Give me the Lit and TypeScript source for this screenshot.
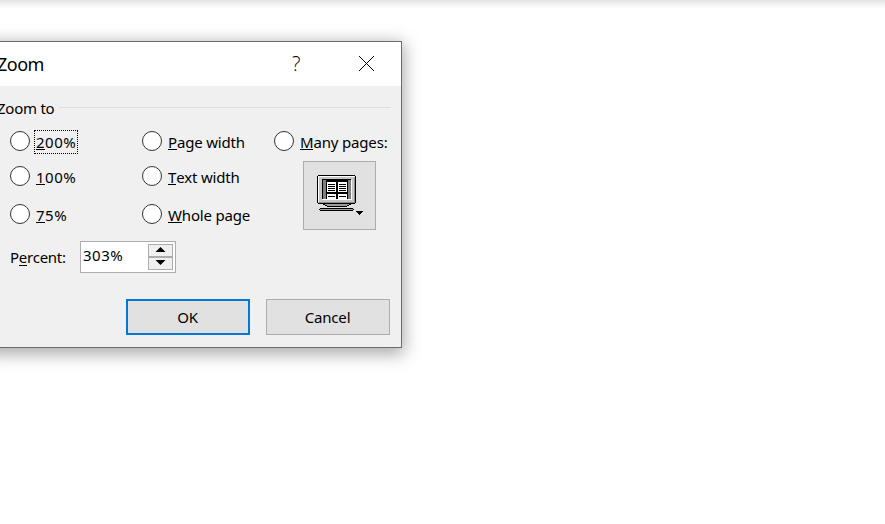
import { LitElement, html, css, svg } from "lit";
import { customElement, property } from "lit/decorators.js";

@customElement("zoom-option")
class ZoomOption extends LitElement {
  @property() label = "";
  @property({ type: Boolean }) focused = false;
  static styles = css`
    :host { display: flex; height: 22px; align-items: flex-start; white-space: nowrap; }
    .dot { flex: none; box-sizing: border-box; width: 20px; height: 20px; border: 1.2px solid #333; border-radius: 50%; background: #fff; }
    .label { box-sizing: border-box; height: 24px; margin: -1px 0 0 4px; padding: 0 1px; border: 1px solid transparent; line-height: 23px; }
    .number { letter-spacing: 0.5px; }
    .focus { border: 1px dotted #000; padding-right: 0.5px; }
    .key { box-shadow: 0 1px 0 #000; display: inline-block; height: 18px; line-height: 23px; }
  `;
  render() {
    const number = this.label.endsWith("%") ? "number" : "";
    return html`<span class="dot"></span
      ><span class="label ${number} ${this.focused ? "focus" : ""}"><span class="key">${this.label[0]}</span>${this.label.slice(1)}</span>`;
  }
}

@customElement("app-root")
class AppRoot extends LitElement {
  static styles = css`
    :host { display: block; box-sizing: border-box; width: 885px; height: 524px; overflow: hidden; padding-top: 41px;
      background: linear-gradient(#e3e3e3, #f3f3f3 4px, #fff 9px) #fff;
      font: 15px "Noto Sans", "Open Sans", sans-serif; letter-spacing: -0.17px; color: #000; }
    .dialog { box-sizing: border-box; width: 415px; height: 307px; margin-left: -13px; border: 1px solid #6b6b6b; background: #f0f0f0;
      box-shadow: 0 4px 16px 2px rgba(0,0,0,.34); }
    .title { display: flex; align-items: center; height: 44px; background: #fff; padding-left: 9px; }
    .name { flex: 1; font-size: 18px; letter-spacing: -0.5px; }
    .help { width: 10px; font-size: 20px; margin-right: 56px; font-family: "Open Sans", sans-serif; font-weight: 350; line-height: 20px; padding-bottom: 1px; }
    .close { width: 17px; height: 17px; margin: 0 26px 1px 0; }
    .legend { display: flex; align-items: center; height: 22px; margin: 11px 10px 0 9px; letter-spacing: -0.25px; }
    .rule { flex: 1; height: 1px; background: #dcdcdc; margin: 0 0 2px 5px; }
    .options { display: grid; grid-template-columns: 132px 132px 1fr; margin: 12px 0 0 22px; height: 99px; }
    .col { display: flex; flex-direction: column; }
    .col zoom-option:nth-child(2) { margin-top: 13px; }
    .col zoom-option:nth-child(3) { margin-top: 16px; }
    .pages { box-sizing: border-box; width: 73px; height: 69px; margin: 8px 0 0 29px; border: 1px solid #adadad; background: #e1e1e1; }
    .pages svg { display: block; margin: 13px 0 0 12px; }
    .percent { display: flex; align-items: center; margin: 11px 0 0 22px; height: 32px; letter-spacing: -0.25px; }
    .ptext { width: 70px; }
    u { text-decoration: none; box-shadow: 0 1px 0 #000; display: inline-block; height: 18px; line-height: 20px; }
    .field { box-sizing: border-box; display: flex; width: 96px; height: 32px; border: 1px solid #abadb3; background: #fff; padding: 2px; }
    .value { flex: 1; line-height: 23px; letter-spacing: 0.5px; }
    .spin { display: flex; flex-direction: column; width: 25px; }
    .step { box-sizing: border-box; height: 13px; width: 25px; border: 1px solid #acacac; background: #f0f0f0; display: flex; align-items: flex-start; justify-content: center; }
    .step svg { display: block; margin-top: 2px; }
    .buttons { display: flex; gap: 16px; margin: 26px 0 0 138px; }
    .btn { box-sizing: border-box; width: 124px; height: 36px; padding-right: 1px; border: 1px solid #adadad; background: #e1e1e1; text-align: center; line-height: 34px; }
    .default { border: 2px solid #0078d7; line-height: 32px; }
  `;
  monitor() {
    const lines = [9, 11, 13, 15, 21];
    return svg`<svg width="48" height="40" shape-rendering="crispEdges">
      <path fill="#000" d="M2 0h37v1h1v27h-1v1H2v-1H1V1h1z"/>
      <path fill="#c6c6c6" d="M2 1h37v27H2z"/>
      <path fill="#fff" d="M2 1h37v1H3v25H2zM6 24h30v1H6zM35 5h1v20h-1z"/>
      <path fill="#909090" d="M38 2h1v26H3v-1h35z"/>
      <path fill="#808080" d="M6 4h29v20H6z"/>
      <path fill="#000" d="M6 4h29v1H7v19H6zM10 5h22v19H10z"/>
      <path fill="#fff" d="M11 7h9v10h-9zM22 7h9v10h-9zM11 19h9v5h-9zM22 19h9v5h-9z"/>
      ${lines.map((y) => svg`<path fill="#000" d="M12 ${y}h7v1h-7zM23 ${y}h7v1h-7z"/>`)}
      <path fill="#000" d="M7 29h28v1h-2v1h-2v1H11v-1H9v-1H7zM4 33h33v1h1v1h-1v1H4v-1H3v-1h1z"/>
      <path fill="#a0a0a0" d="M9 29h24v1h-2v1H11v-1H9zM4 34h33v1H4z"/>
      <path fill="#00ff00" d="M25 29h2v1h-2z"/>
      <path fill="#000" d="M40 36h7v1h-1v1h-1v1h-1v1h-1v-1h-1v-1h-1v-1h-1z"/>
    </svg>`;
  }
  render() {
    return html`<div class="dialog">
      <div class="title">
        <span class="name">Zoom</span><span class="help">?</span>
        <svg class="close" viewBox="0 0 17 17"><path d="M1 1L16 16M16 1L1 16" stroke="#000" stroke-width="1"/></svg>
      </div>
      <div class="legend"><span>Zoom to</span><span class="rule"></span></div>
      <div class="options">
        <div class="col">
          <zoom-option label="200%" focused></zoom-option>
          <zoom-option label="100%"></zoom-option>
          <zoom-option label="75%"></zoom-option>
        </div>
        <div class="col">
          <zoom-option label="Page width"></zoom-option>
          <zoom-option label="Text width"></zoom-option>
          <zoom-option label="Whole page"></zoom-option>
        </div>
        <div class="col">
          <zoom-option label="Many pages:"></zoom-option>
          <div class="pages">${this.monitor()}</div>
        </div>
      </div>
      <div class="percent">
        <span class="ptext">P<u>e</u>rcent:</span>
        <div class="field">
          <span class="value">303%</span>
          <div class="spin">
            <span class="step"><svg width="11" height="5"><path d="M0.5 5L5.5 0L10.5 5z"/></svg></span>
            <span class="step"><svg width="11" height="5"><path d="M0.5 0L5.5 5L10.5 0z"/></svg></span>
          </div>
        </div>
      </div>
      <div class="buttons"><div class="btn default">OK</div><div class="btn">Cancel</div></div>
    </div>`;
  }
}
